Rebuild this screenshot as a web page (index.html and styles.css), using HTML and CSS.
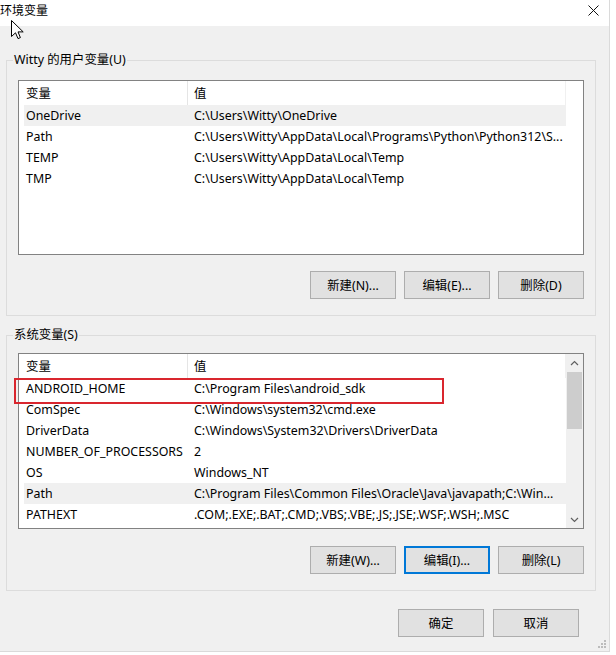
FILE: index.html
```html
<!DOCTYPE html>
<html lang="zh-CN">
<head>
<meta charset="utf-8">
<title>环境变量</title>
<link rel="stylesheet" href="styles.css">
</head>
<body>
<div class="window">
  <div class="titlebar">
    <span class="title">环境变量</span>
    <svg class="close" width="11" height="11" viewBox="0 0 11 11"><path d="M0.5 0.5 L10.5 10.5 M10.5 0.5 L0.5 10.5" stroke="#111" stroke-width="1" fill="none"/></svg>
  </div>
  <div class="body">
    <fieldset class="group">
      <legend>Witty 的用户变量(U)</legend>
      <div class="list">
        <div class="list-main">
          <div class="list-head"><div class="hc">变量</div><div class="hc">值</div></div>
          <div class="row hl"><div class="c">OneDrive</div><div class="c">C:\Users\Witty\OneDrive</div></div>
          <div class="row"><div class="c">Path</div><div class="c">C:\Users\Witty\AppData\Local\Programs\Python\Python312\S...</div></div>
          <div class="row"><div class="c">TEMP</div><div class="c">C:\Users\Witty\AppData\Local\Temp</div></div>
          <div class="row"><div class="c">TMP</div><div class="c">C:\Users\Witty\AppData\Local\Temp</div></div>
        </div>
        <div class="vspace"></div>
      </div>
      <div class="btns">
        <button class="btn">新建(N)...</button>
        <button class="btn">编辑(E)...</button>
        <button class="btn">删除(D)</button>
      </div>
    </fieldset>

    <fieldset class="group second">
      <legend>系统变量(S)</legend>
      <div class="list tall">
        <div class="list-main">
          <div class="list-head"><div class="hc">变量</div><div class="hc">值</div></div>
          <div class="row"><div class="c">ANDROID_HOME</div><div class="c">C:\Program Files\android_sdk</div></div>
          <div class="row"><div class="c">ComSpec</div><div class="c">C:\Windows\system32\cmd.exe</div></div>
          <div class="row"><div class="c">DriverData</div><div class="c">C:\Windows\System32\Drivers\DriverData</div></div>
          <div class="row"><div class="c">NUMBER_OF_PROCESSORS</div><div class="c">2</div></div>
          <div class="row"><div class="c">OS</div><div class="c">Windows_NT</div></div>
          <div class="row hl"><div class="c">Path</div><div class="c">C:\Program Files\Common Files\Oracle\Java\javapath;C:\Win...</div></div>
          <div class="row"><div class="c">PATHEXT</div><div class="c">.COM;.EXE;.BAT;.CMD;.VBS;.VBE;.JS;.JSE;.WSF;.WSH;.MSC</div></div>
        </div>
        <div class="scrollbar">
          <div class="sb-btn"><svg width="9" height="6" viewBox="0 0 9 6"><path d="M1 5 L4.5 1.5 L8 5" stroke="#606060" stroke-width="1.2" fill="none"/></svg></div>
          <div class="sb-thumb"></div>
          <div class="sb-track"></div>
          <div class="sb-btn"><svg width="9" height="6" viewBox="0 0 9 6"><path d="M1 1 L4.5 4.5 L8 1" stroke="#606060" stroke-width="1.2" fill="none"/></svg></div>
        </div>
        <div class="mark"></div>
      </div>
      <div class="btns">
        <button class="btn">新建(W)...</button>
        <button class="btn default">编辑(I)...</button>
        <button class="btn">删除(L)</button>
      </div>
    </fieldset>

    <div class="btns footer">
      <button class="btn">确定</button>
      <button class="btn">取消</button>
    </div>
  </div>
  <svg class="grip" width="9" height="9" viewBox="0 0 9 9">
    <rect x="6" y="0" width="2" height="2" fill="#bcbcbc"/>
    <rect x="3" y="3" width="2" height="2" fill="#bcbcbc"/>
    <rect x="6" y="3" width="2" height="2" fill="#bcbcbc"/>
    <rect x="0" y="6" width="2" height="2" fill="#bcbcbc"/>
    <rect x="3" y="6" width="2" height="2" fill="#bcbcbc"/>
    <rect x="6" y="6" width="2" height="2" fill="#bcbcbc"/>
  </svg>
  <svg class="cursor" width="14" height="20" viewBox="0 0 14 20"><path d="M0.5 0.5 L0.5 16.5 L4.5 12.8 L7 18.6 L9.4 17.6 L7 11.9 L12.2 11.9 Z" fill="#fff" stroke="#000" stroke-width="1" stroke-linejoin="miter"/></svg>
</div>
</body>
</html>
```
FILE: styles.css
```css
html, body {
  margin: 0;
  padding: 0;
  background: #ffffff;
}
body {
  font-family: "Noto Sans", "Noto Sans CJK SC", sans-serif;
  font-size: 12.4px;
  color: #000;
}
.window {
  position: relative;
  width: 610px;
  box-sizing: border-box;
  background: #f0f0f0;
  border-right: 1px solid #dadada;
  border-bottom: 1px solid #dadada;
}
.titlebar {
  height: 26px;
  background: #fff;
  display: flex;
  justify-content: space-between;
  align-items: flex-start;
  padding: 2px 10px 0 0;
  box-sizing: border-box;
}
.title {
  font-family: "Noto Sans CJK SC", sans-serif;
  font-size: 12px;
  line-height: 16px;
}
.close {
  margin-top: 3px;
}
.body {
  padding: 26px 13px 14px 6px;
}
.group {
  margin: 0;
  padding: 12px 11px 16px 11px;
  border: 1px solid #dcdcdc;
  min-width: 0;
}
.group.second {
  margin-top: 11px;
  padding-top: 10px;
}
.group legend {
  font-size: 12.4px;
  line-height: 16px;
  padding: 0 1px;
  margin-left: -5px;
  color: #000;
}
.list {
  position: relative;
  display: flex;
  height: 173px;
  border: 1px solid #828282;
  background: #fff;
}
.list.tall {
  height: 174px;
}
.list-main {
  flex: 1;
  min-width: 0;
  overflow: hidden;
}
.vspace {
  width: 17px;
}
.list-head {
  display: grid;
  grid-template-columns: 169px 1fr;
  grid-template-rows: 24px;
  height: 24px;
  border-right: 1px solid #f0f0f0;
}
.hc {
  padding: 1px 0 0 6px;
  line-height: 23px;
}
.hc:first-child {
  padding-left: 7px;
  border-right: 1px solid #e5e5e5;
}
.row {
  display: grid;
  grid-template-columns: 168px 1fr;
  grid-template-rows: 21px;
  height: 21px;
  margin-left: 5px;
}
.row.hl {
  background: #f0f0f0;
}
.c {
  padding: 1px 0 0 2px;
  line-height: 20px;
  white-space: nowrap;
  overflow: hidden;
}
.scrollbar {
  width: 17px;
  display: flex;
  flex-direction: column;
  background: #f0f0f0;
}
.sb-btn {
  height: 17px;
  display: flex;
  align-items: center;
  justify-content: center;
}
.sb-thumb {
  height: 57px;
  margin: 1px 1px 0 1px;
  background: #cdcdcd;
}
.sb-track {
  flex: 1;
}
.mark {
  position: absolute;
  left: -5px;
  top: 24px;
  width: 430px;
  height: 26px;
  box-sizing: border-box;
  border: 2px solid #d9262e;
}
.btns {
  display: flex;
  justify-content: flex-end;
  gap: 8px;
  margin-top: 16px;
}
.group.second .btns {
  margin-top: 17px;
}
.btn {
  width: 86px;
  height: 28px;
  box-sizing: border-box;
  border: 1px solid #adadad;
  background: #e1e1e1;
  font-family: "Noto Sans", "Noto Sans CJK SC", sans-serif;
  font-size: 12.4px;
  color: #000;
  padding: 0;
  margin: 0;
}
.btn.default {
  border: 2px solid #0078d7;
}
.footer {
  margin-top: 18px;
  padding-right: 17px;
  gap: 9px;
}
.grip {
  position: absolute;
  right: 2px;
  bottom: 2px;
}
.cursor {
  position: absolute;
  left: 11px;
  top: 20px;
}
```
